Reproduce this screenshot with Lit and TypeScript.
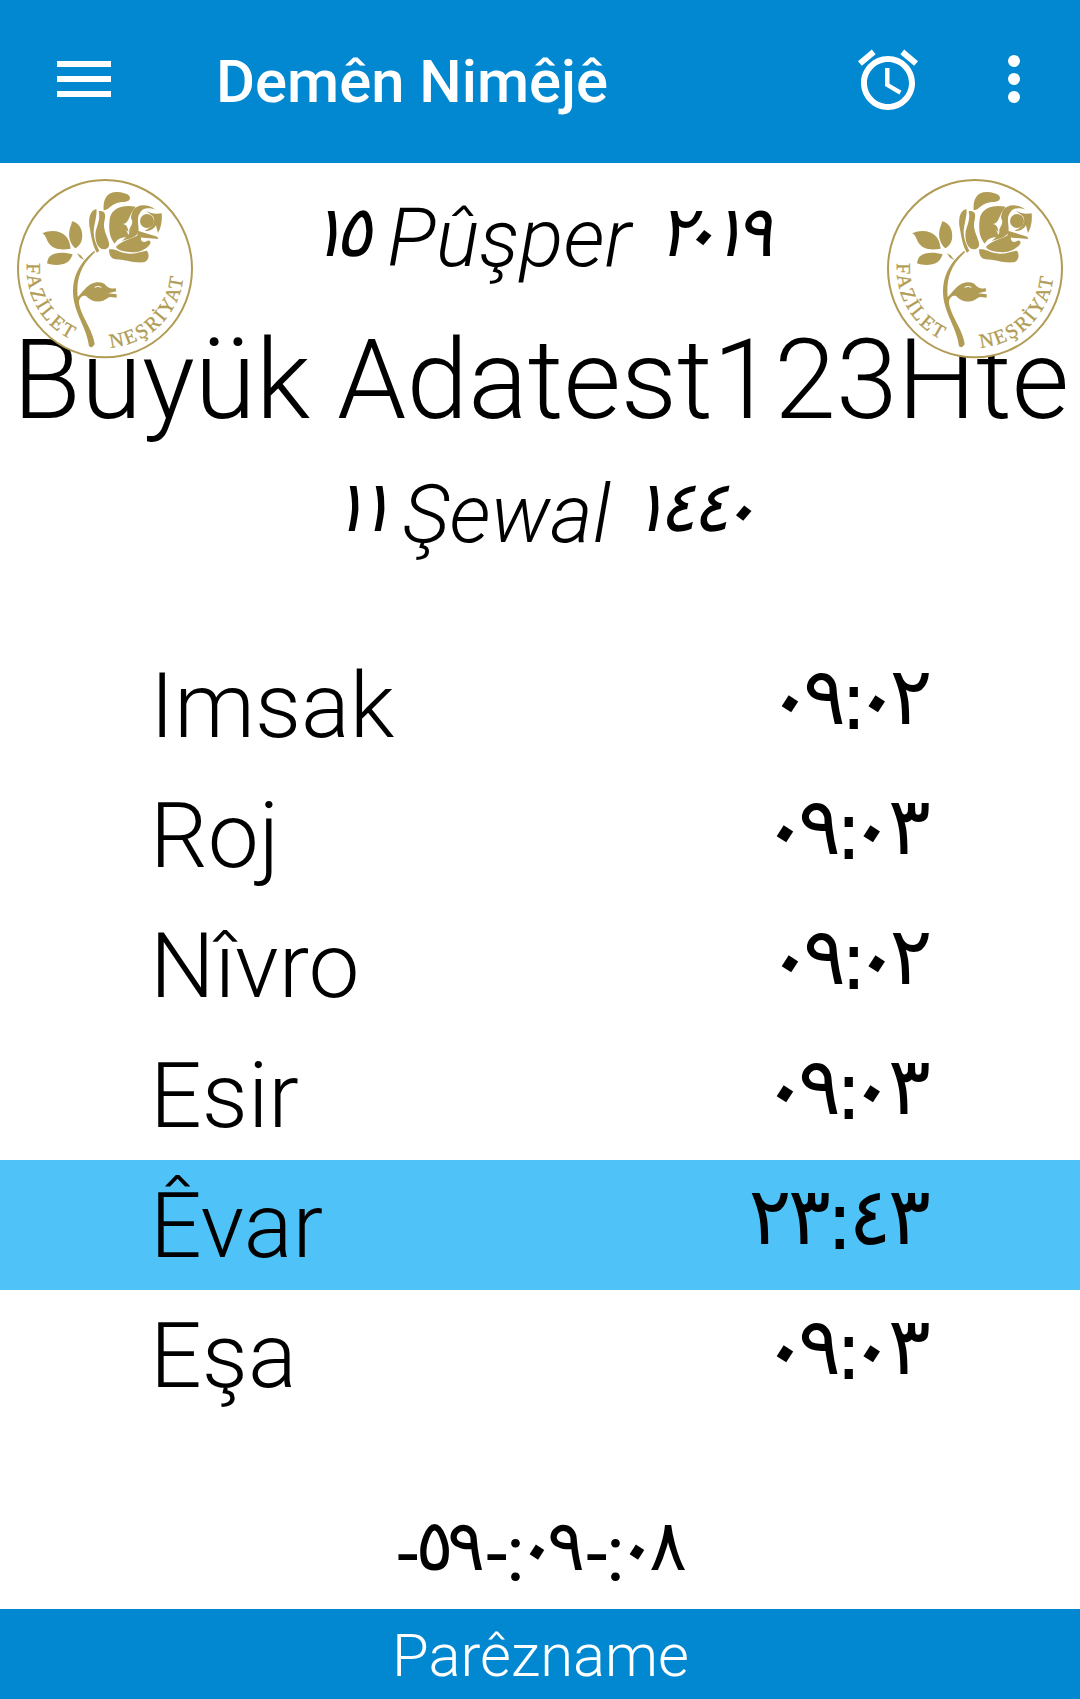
import { LitElement, html, css, svg } from "lit";
import { customElement } from "lit/decorators.js";

/** A glyph and the horizontal centre of its cell. */
type Glyph = [string, number];
interface Prayer { name: string; time: Glyph[]; active?: boolean; }

const NINE_TWO: Glyph[] = [["٠", 40.5], ["٩", 74.5], [":", 103.7], ["٠", 127.5], ["٢", 161]];
const NINE_THREE: Glyph[] = [["٠", 35.5], ["٩", 69.5], [":", 98.7], ["٠", 122.5], ["٣", 159.5]];

const PRAYERS: Prayer[] = [
  { name: "Imsak", time: NINE_TWO },
  { name: "Roj", time: NINE_THREE },
  { name: "Nîvro", time: NINE_TWO },
  { name: "Esir", time: NINE_THREE },
  { name: "Êvar", time: [["٢", 20], ["٣", 59.5], [":", 89.7], ["٤", 120], ["٣", 159.5]], active: true },
  { name: "Eşa", time: NINE_THREE },
];

const ADVANCE = 0.5371;
const DOT_HEIGHT = 0.31;

/** Lays glyphs out on a baseline; the zero is turned into a diamond. */
function figures(glyphs: Glyph[], size: number, colonDrop = 5) {
  return glyphs.map(([c, x]) => {
    if (c === "٠") {
      const s = size * 1.32, a = (ADVANCE / 2) * s, b = DOT_HEIGHT * s;
      const t = (33 * Math.PI) / 180, cy = -size * 0.285;
      const px = x + 1 - (a * Math.cos(t) + b * Math.sin(t));
      const py = cy - (a * Math.sin(t) - b * Math.cos(t));
      return svg`<tspan x=${px} y=${py} rotate="33" font-size=${s}>${c}</tspan>`;
    }
    if (c === ":") return svg`<tspan x=${x - 0.1685 * size} y=${colonDrop}>:</tspan>`;
    return svg`<tspan x=${x - (ADVANCE / 2) * size} y="0">${c}</tspan>`;
  });
}

@customElement("rose-logo")
class RoseLogo extends LitElement {
  static styles = css`
    :host { display: block; width: 180px; height: 180px; }
    svg { display: block; width: 180px; height: 180px; }
    .letters { font-family: "Liberation Serif", serif; font-size: 60px; letter-spacing: 6.5px; fill: #b19c55; stroke: #b19c55; stroke-width: 1; }
  `;
  render() {
    // Drawn in a 540-unit grid, three units per pixel.
    return html`<svg viewBox="45 56 540 540">
      <ellipse cx="315" cy="325" rx="261" ry="266" fill="#fff" stroke="#b19c55" stroke-width="6" />
      <g fill="#b19c55">
        <path d="M311 150 C308 115 322 94 352 95 C380 97 396 106 388 119 C382 127 364 123 349 129 C331 136 324 150 311 150Z"/>
        <path d="M289 146 C268 150 264 180 270 207 C275 239 281 263 291 277 L298 271 C287 250 278 226 282 202 C286 180 292 157 289 146Z"/>
        <path d="M296 153 C313 149 320 160 313 183 C308 207 321 225 327 247 C330 264 317 268 305 266 C289 259 284 234 287 213 C294 190 301 174 296 153Z"/>
        <path d="M407 139 C370 132 338 142 330 171 C325 202 327 231 344 250 C352 237 361 230 385 231 C384 220 383 214 376 207 L386 215 C382 196 379 194 368 191 C389 190 385 163 407 139Z"/>
        <path d="M398 151 C410 133 441 128 466 148 C446 141 428 142 420 157 C407 176 419 194 415 216 C407 234 384 234 365 243 C376 230 390 224 388 211 C387 201 400 194 396 179 C390 172 395 162 398 151Z"/>
        <circle cx="441" cy="182" r="21"/>
        <path d="M438 151 C449 156 459 160 470 160 L485 159 C487 180 484 201 474 218 C470 206 470 201 468 195 C461 207 447 215 434 211 C457 202 469 185 459 168 C453 161 445 158 438 151Z"/>
        <path d="M413 211 L472 229 L475 236 L449 234 L412 231Z"/>
        <path d="M348 259 C367 241 394 236 414 225 L423 232 C421 243 431 248 439 243 C448 238 453 241 451 250 C437 269 415 279 389 275 C370 273 352 270 348 259Z"/>
        <path d="M327 267 C347 264 354 274 378 279 C401 283 422 274 441 271 C450 285 446 303 430 306 C400 309 372 297 347 297 C332 295 327 283 327 267Z"/>
        <path d="M127 219 C151 208 180 210 197 227 C208 239 210 252 212 265 C188 269 164 270 149 252 C139 241 139 225 127 219Z"/>
        <path d="M216 183 C239 187 250 211 246 236 C243 251 234 260 226 264 C211 252 205 232 208 213 C209 201 215 193 216 183Z"/>
        <path d="M218 282 C196 276 165 274 150 288 C142 296 143 304 141 309 C161 317 187 315 202 306 C211 300 215 290 218 282Z"/>
        <path d="M231 279 L242 285 L253 299 L240 292Z"/>
        <path d="M282 272 C239 306 218 348 219 397 C221 458 260 499 267 558 C273 563 280 560 284 551 C280 508 235 456 237 421 C242 409 248 404 258 407 C269 419 283 426 302 423 C316 421 320 412 332 410 L350 412 L350 402 L324 399 L349 393 L347 384 C329 386 321 380 313 370 C292 360 270 369 255 386 C245 396 240 404 233 410 C229 362 238 318 286 275Z"/>
      </g>
      <path d="M284 381 Q295 375 304 381" stroke="#fff" stroke-width="3" fill="none"/>
      <path id="l" d="M81 309 A 235 235 0 0 0 260 554" fill="none"/>
      <path id="r" d="M331 562 A 236 236 0 0 0 548 290" fill="none"/>
      <text class="letters"><textPath href="#l">FAZİLET</textPath></text>
      <text class="letters"><textPath href="#r">NEŞRİYAT</textPath></text>
    </svg>`;
  }
}

@customElement("app-root")
class AppRoot extends LitElement {
  static styles = css`
    :host { display: block; width: 1080px; height: 1699px; overflow: hidden; background: #fff; color: #000; font-family: Roboto, sans-serif; }
    .page { display: flex; flex-direction: column; height: 1699px; position: relative; }
    .bar { height: 163px; padding-bottom: 5px; box-sizing: border-box; background: #0288d1; color: #fff; display: flex; align-items: center; flex: none; }
    .menu { width: 54px; height: 36px; margin-left: 57px; }
    .bar h1 { margin: 6px auto 0 105px; font-size: 59.8px; line-height: 70px; font-weight: 500; white-space: nowrap; }
    .alarm { width: 72px; height: 72px; margin-right: 54px; margin-top: 2px; }
    .more { width: 72px; height: 72px; margin-right: 30px; }
    .logo { position: absolute; top: 178.67px; left: 15px; }
    .logo.end { left: 885px; }
    .date { display: block; width: 1080px; height: 150px; flex: none; }
    .word { font-size: 81.7px; font-style: italic; font-weight: 300; }
    .city { text-align: center; white-space: nowrap; font-weight: 300; flex: none; height: 130px; padding-left: 2px; font-size: 111px; line-height: 135px; }
    .num { font-family: "DejaVu Sans", sans-serif; direction: ltr; unicode-bidi: bidi-override; }
    .small { font-size: 71px; }
    .list { margin-top: 47px; flex: none; }
    .row { height: 130px; padding: 0 150px; display: flex; justify-content: space-between; font-size: 91px; line-height: 132px; font-weight: 300; }
    .row.active { background: #4fc3f7; }
    .time { width: 180px; height: 130px; font-size: 80px; font-weight: 400; overflow: visible; }
    .left { display: block; width: 1080px; height: 189px; flex: none; }
    .mark { font-family: Roboto, sans-serif; font-size: 78px; font-weight: 400; }
    .foot { height: 90px; padding-left: 1px; background: #0288d1; color: #fff; text-align: center; font-size: 59.8px; line-height: 94px; font-weight: 300; flex: none; }
  `;

  private date(day: Glyph[], word: string, wordX: number, year: Glyph[], base: number) {
    return html`<svg class="date" viewBox="0 0 1080 150">
      <text class="num small" transform="translate(0 ${base}) skewX(-12)">${figures(day, 71)}</text>
      <text class="word" x=${wordX} y=${base + 10.7}>${word}</text>
      <text class="num small" transform="translate(0 ${base}) skewX(-12)">${figures(year, 71)}</text>
    </svg>`;
  }

  private countdown() {
    const mark = (c: string, x: number) => svg`<tspan class="mark" x=${x} y="11">${c}</tspan>`;
    return html`<svg class="left" viewBox="0 0 1080 189">
      <text class="num small" transform="translate(0 150)">${mark("-", 397)}${figures([["٥", 434.5], ["٩", 466]], 71)}${mark("-", 486)}${mark(":", 506)}${figures([["٠", 537.5], ["٩", 566]], 71)}${mark("-", 586)}${mark(":", 606)}${figures([["٠", 637.5], ["٨", 668]], 71)}</text>
    </svg>`;
  }

  render() {
    return html`<div class="page">
      <header class="bar">
        <svg class="menu" viewBox="0 0 54 36" fill="#fff"><path d="M0 0H54V6H0ZM0 15H54V21H0ZM0 30H54V36H0Z"/></svg>
        <h1>Demên Nimêjê</h1>
        <svg class="alarm" viewBox="0 0 24 24" fill="#fff"><path d="M22 5.72l-4.6-3.86-1.29 1.53 4.6 3.86L22 5.72zM7.88 3.39L6.6 1.86 2 5.71l1.29 1.53 4.59-3.85zM12.5 8H11v6l4.75 2.85.75-1.23-4-2.37V8zM12 4c-4.97 0-9 4.03-9 9s4.02 9 9 9c4.97 0 9-4.03 9-9s-4.03-9-9-9zm0 16c-3.87 0-7-3.13-7-7s3.13-7 7-7 7 3.13 7 7-3.13 7-7 7z"/></svg>
        <svg class="more" viewBox="0 0 24 24" fill="#fff"><circle cx="12" cy="6" r="2"/><circle cx="12" cy="12" r="2"/><circle cx="12" cy="18" r="2"/></svg>
      </header>
      ${this.date([["١", 327.5], ["٥", 353.5]], "Pûşper", 387, [["٢", 677], ["٠", 700.5], ["١", 728], ["٩", 754]], 92.5)}
      <div class="city">Büyük Adatest123Hte</div>
      ${this.date([["١", 349.5], ["١", 375.5]], "Şewal", 402.5, [["١", 649.5], ["٤", 677.5], ["٤", 711], ["٠", 740.5]], 88)}
      <div class="list">${PRAYERS.map(p => html`<div class="row ${p.active ? "active" : ""}"><span>${p.name}</span><svg class="time" viewBox="0 0 180 130"><text class="num" transform="translate(0 84)">${figures(p.time, 80)}</text></svg></div>`)}</div>
      ${this.countdown()}
      <footer class="foot">Parêzname</footer>
      <rose-logo class="logo"></rose-logo>
      <rose-logo class="logo end"></rose-logo>
    </div>`;
  }
}
